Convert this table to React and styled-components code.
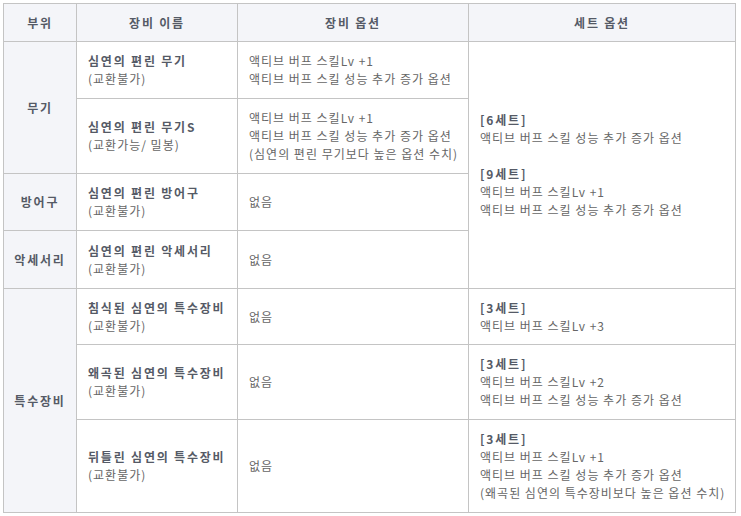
import React from "react";
import styled, { createGlobalStyle } from "styled-components";

const Global = createGlobalStyle`
  body {
    margin: 0;
    background: #fff;
    font-family: "Noto Sans CJK KR", "Noto Sans", sans-serif;
  }
`;

const Wrap = styled.div`
  padding: 3px 5px 3px 3px;
`;

const Table = styled.table`
  width: 733px;
  border-collapse: collapse;
  table-layout: fixed;
  font-size: 12px;
  line-height: 18px;
  letter-spacing: 1px;
  color: #666;
  td,
  th {
    border: 1px solid #c4c4c4;
  }
`;

const Head = styled.th`
  background: #f4f5f9;
  color: #555a66;
  font-weight: bold;
  letter-spacing: 1.8px;
  height: 37px;
  padding: 0;
  text-align: center;
`;

const Part = styled.td`
  background: #f4f5f9;
  color: #555a66;
  font-weight: bold;
  letter-spacing: 1.8px;
  text-align: center;
  padding: 0;
`;

const Cell = styled.td`
  padding: 9px 8px 9px 11px;
  vertical-align: middle;
  white-space: nowrap;
  height: ${(p) => p.h}px;
`;

const Name = styled.div`
  font-weight: bold;
  letter-spacing: 1.8px;
  color: #555a66;
`;

const SetTitle = styled.div`
  font-weight: bold;
  letter-spacing: 1.8px;
  color: #555a66;
  margin-top: ${(p) => (p.gap ? "18px" : "0")};
`;

const rows = [
  {
    part: "무기",
    span: 2,
    name: "심연의 편린 무기",
    trade: "(교환불가)",
    opts: ["액티브 버프 스킬Lv +1", "액티브 버프 스킬 성능 추가 증가 옵션"],
    h: 38,
    set: {
      span: 4,
      groups: [
        { t: "[6세트]", l: ["액티브 버프 스킬 성능 추가 증가 옵션"] },
        { t: "[9세트]", l: ["액티브 버프 스킬Lv +1", "액티브 버프 스킬 성능 추가 증가 옵션"] },
      ],
    },
  },
  {
    name: "심연의 편린 무기S",
    trade: "(교환가능/ 밀봉)",
    opts: [
      "액티브 버프 스킬Lv +1",
      "액티브 버프 스킬 성능 추가 증가 옵션",
      "(심연의 편린 무기보다 높은 옵션 수치)",
    ],
    h: 56,
  },
  { part: "방어구", span: 1, name: "심연의 편린 방어구", trade: "(교환불가)", opts: ["없음"], h: 38 },
  { part: "악세서리", span: 1, name: "심연의 편린 악세서리", trade: "(교환불가)", opts: ["없음"], h: 39 },
  {
    part: "특수장비",
    span: 3,
    name: "침식된 심연의 특수장비",
    trade: "(교환불가)",
    opts: ["없음"],
    h: 37,
    set: { span: 1, groups: [{ t: "[3세트]", l: ["액티브 버프 스킬Lv +3"] }] },
  },
  {
    name: "왜곡된 심연의 특수장비",
    trade: "(교환불가)",
    opts: ["없음"],
    h: 56,
    set: {
      span: 1,
      groups: [{ t: "[3세트]", l: ["액티브 버프 스킬Lv +2", "액티브 버프 스킬 성능 추가 증가 옵션"] }],
    },
  },
  {
    name: "뒤틀린 심연의 특수장비",
    trade: "(교환불가)",
    opts: ["없음"],
    h: 74,
    set: {
      span: 1,
      groups: [
        {
          t: "[3세트]",
          l: [
            "액티브 버프 스킬Lv +1",
            "액티브 버프 스킬 성능 추가 증가 옵션",
            "(왜곡된 심연의 특수장비보다 높은 옵션 수치)",
          ],
        },
      ],
    },
  },
];

export default function App() {
  return (
    <Wrap>
      <Global />
      <Table>
        <colgroup>
          <col style={{ width: 73 }} />
          <col style={{ width: 161 }} />
          <col style={{ width: 231 }} />
          <col />
        </colgroup>
        <thead>
          <tr>
            <Head>부위</Head>
            <Head>장비 이름</Head>
            <Head>장비 옵션</Head>
            <Head>세트 옵션</Head>
          </tr>
        </thead>
        <tbody>
          {rows.map((r, i) => (
            <tr key={i}>
              {r.part && <Part rowSpan={r.span}>{r.part}</Part>}
              <Cell h={r.h}>
                <Name>{r.name}</Name>
                <div>{r.trade}</div>
              </Cell>
              <Cell h={r.h}>
                {r.opts.map((o) => (
                  <div key={o}>{o}</div>
                ))}
              </Cell>
              {r.set && (
                <Cell rowSpan={r.set.span}>
                  {r.set.groups.map((g, k) => (
                    <React.Fragment key={k}>
                      <SetTitle gap={k > 0}>{g.t}</SetTitle>
                      {g.l.map((line) => (
                        <div key={line}>{line}</div>
                      ))}
                    </React.Fragment>
                  ))}
                </Cell>
              )}
            </tr>
          ))}
        </tbody>
      </Table>
    </Wrap>
  );
}
